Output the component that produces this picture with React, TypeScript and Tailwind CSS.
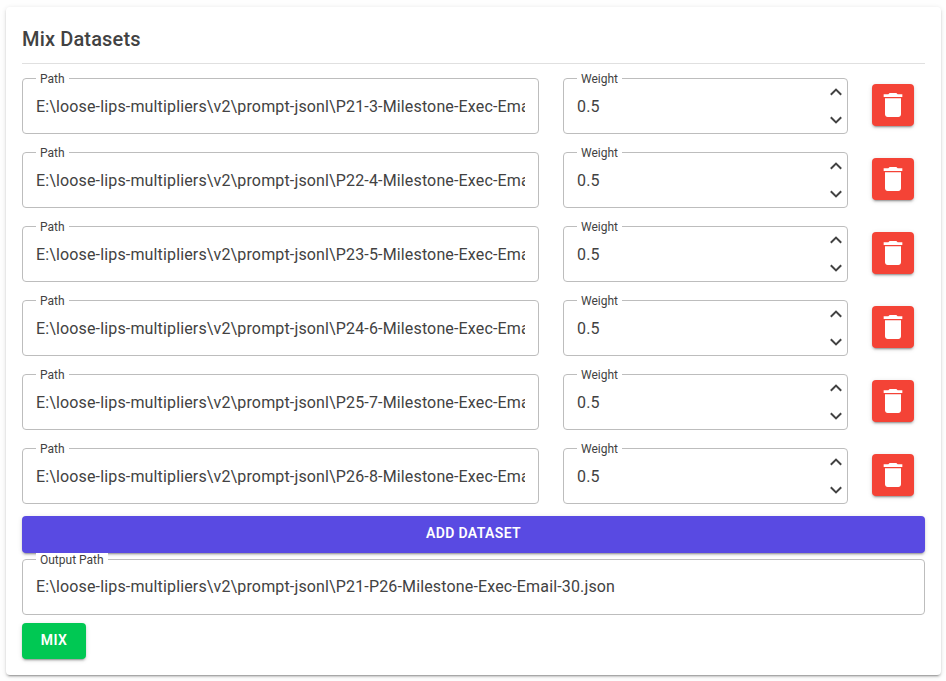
import React from 'react';

const shadow =
  'shadow-[0_3px_1px_-2px_rgba(0,0,0,0.2),0_2px_2px_0_rgba(0,0,0,0.14),0_1px_5px_0_rgba(0,0,0,0.12)]';

const datasets = ['P21-3', 'P22-4', 'P23-5', 'P24-6', 'P25-7', 'P26-8'].map((id) => ({
  path: `E:\\loose-lips-multipliers\\v2\\prompt-jsonl\\${id}-Milestone-Exec-Ema`,
  weight: '0.5',
}));

function Field({
  label,
  value,
  className,
  children,
}: {
  label: string;
  value: string;
  className: string;
  children?: React.ReactNode;
}) {
  return (
    <div className={`relative flex h-14 items-center rounded border border-[#bdbdbd] px-[13px] ${className}`}>
      <span className="absolute -top-[7px] left-[13px] bg-white px-1 text-[12px] leading-[14px]">
        {label}
      </span>
      <span className="min-w-0 flex-1 overflow-hidden whitespace-nowrap text-[16px] leading-6 tracking-[0.15px]">
        {value}
      </span>
      {children}
    </div>
  );
}

function Chevron({ down = false }: { down?: boolean }) {
  return (
    <svg width="12" height="8" viewBox="0 0 12 8" fill="none" stroke="#424242" strokeWidth="2">
      <path d={down ? 'M.8 1.2 6 6.4l5.2-5.2' : 'M.8 6.8 6 1.6l5.2 5.2'} />
    </svg>
  );
}

function TrashIcon() {
  return (
    <svg width="32" height="32" viewBox="0 0 24 24" fill="white">
      <path d="M6 19c0 1.100.9 2 2 2h8c1.100 0 2-.9 2-2V7H6v12zM19 4h-3.500l-1-1h-5l-1 1H5v2h14V4z" />
    </svg>
  );
}

export default function App() {
  return (
    <div className="h-[681px] overflow-hidden bg-[#fefefe] pl-[6px] pt-[7px] font-['Roboto',sans-serif] text-[#424242]">
      <main
        className={`flex h-[668px] w-[935px] flex-col rounded bg-white px-4 pt-4 ${shadow}`}
      >
        <h1 className="h-[41px] w-[903px] shrink-0 border-b border-[#e0e0e0] text-[20px] font-medium leading-8 tracking-[0.15px]">
          Mix Datasets
        </h1>
        <div className="mt-[14px] flex flex-col gap-[18px]">
          {datasets.map((d) => (
            <div key={d.path} className="flex gap-6">
              <Field label="Path" value={d.path} className="w-[517px] pt-[2px]" />
              <Field label="Weight" value={d.weight} className="w-[285px] pt-[2px]">
                <div className="-mr-[8px] -mt-[2px] flex flex-col gap-5">
                  <Chevron />
                  <Chevron down />
                </div>
              </Field>
              <button
                aria-label="Delete"
                className={`mt-[6px] flex size-[42px] items-center justify-center rounded bg-[#f44336] ${shadow}`}
              >
                <TrashIcon />
              </button>
            </div>
          ))}
        </div>
        <button
          className={`mt-3 h-[37px] w-[903px] shrink-0 rounded bg-[#594ae2] pb-[2px] text-[14px] font-semibold tracking-[0.37px] text-white ${shadow}`}
        >
          ADD DATASET
        </button>
        <Field
          label="Output Path"
          value={'E:\\loose-lips-multipliers\\v2\\prompt-jsonl\\P21-P26-Milestone-Exec-Email-30.json'}
          className="mt-[6px] w-[903px]"
        />
        <button
          className={`mt-2 h-9 w-16 rounded bg-[#00c853] pb-[2px] text-[14px] font-semibold tracking-[0.37px] text-white ${shadow}`}
        >
          MIX
        </button>
      </main>
    </div>
  );
}
